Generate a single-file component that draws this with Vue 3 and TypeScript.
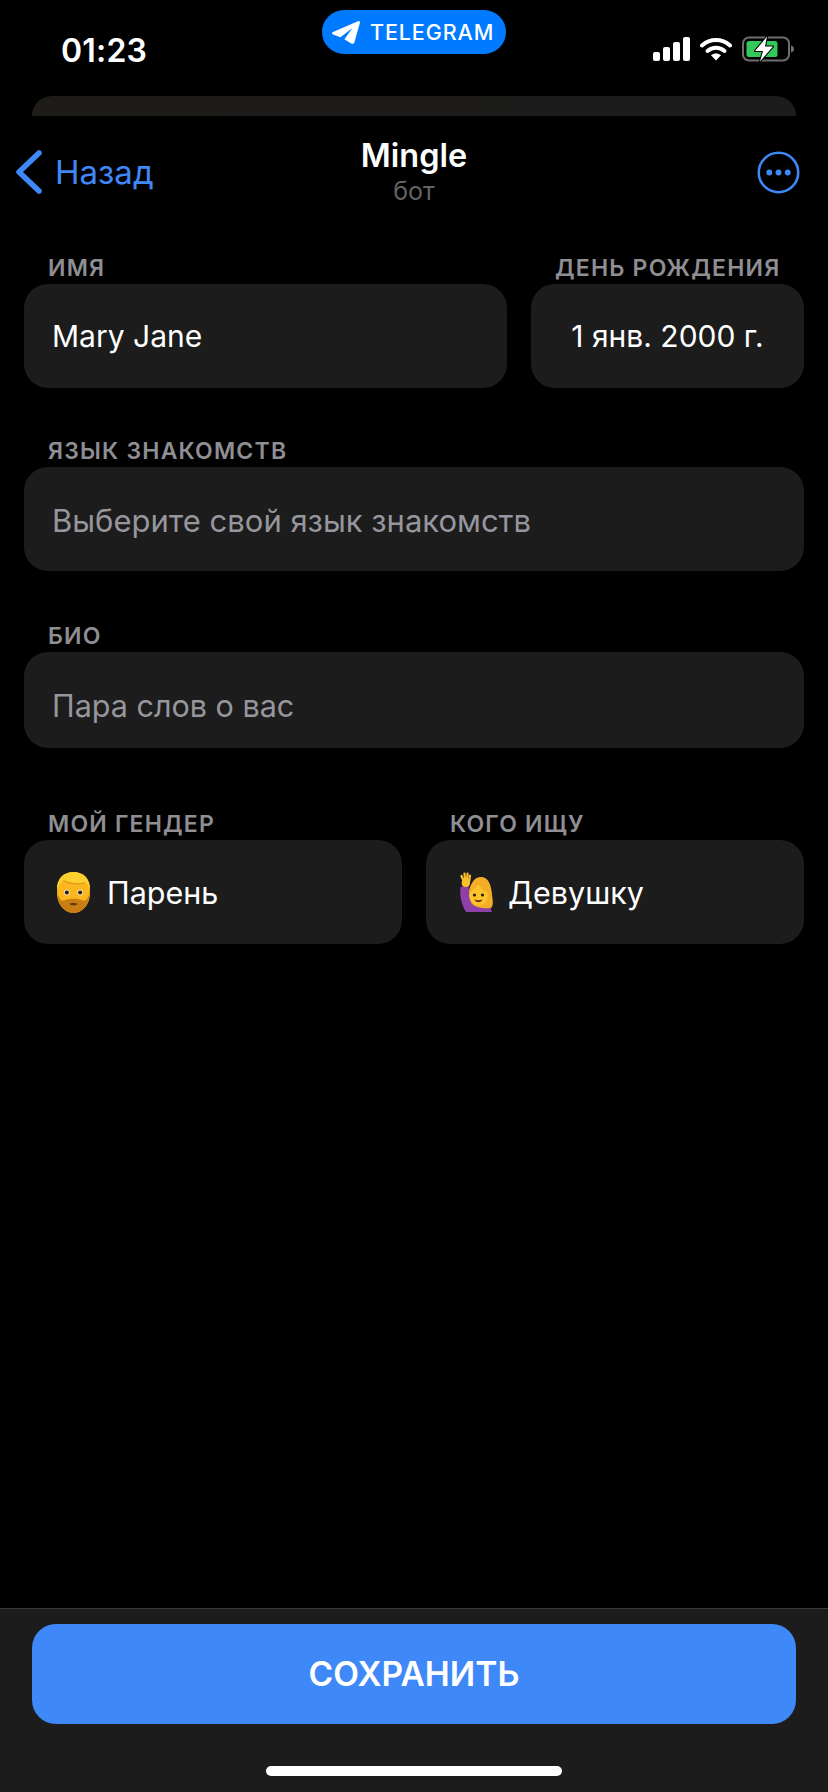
<script setup lang="ts">
interface Option {
	label: string;
	value: string;
	icon: "man" | "woman";
}

const options: Option[] = [
	{ label: "Мой гендер", value: "Парень", icon: "man" },
	{ label: "Кого ищу", value: "Девушку", icon: "woman" },
];
</script>

<template>
	<div class="screen">
		<header class="status">
			<span class="time">01:23</span>
			<div class="pill">
				<svg class="plane" viewBox="0 0 28 23" width="28" height="23">
					<path
						d="M28 1.6C28 .4 27 -.3 25.9 .2L1 11C-.3 11.6 -.3 13.1 1 13.6L8.4 16.3L20.5 7L12.4 18.2L19.2 22.4C20.6 23.2 22.2 22.5 22.5 20.9Z"
						fill="#fff"
					/>
				</svg>
				<span>TELEGRAM</span>
			</div>
			<div class="indicators">
				<svg width="37" height="24" viewBox="0 0 37 24">
					<rect x="0" y="15" width="7" height="9" rx="2" fill="#fff" />
					<rect x="10" y="10" width="7" height="14" rx="2" fill="#fff" />
					<rect x="20" y="5" width="7" height="19" rx="2" fill="#fff" />
					<rect x="30" y="0" width="7" height="24" rx="2" fill="#fff" />
				</svg>
				<svg width="32" height="24" viewBox="0 0 32 24">
					<path d="M2 8.5C10 1.3 22 1.3 30 8.5" fill="none" stroke="#fff" stroke-width="4" stroke-linecap="round" />
					<path d="M7.5 14C12.5 9.8 19.5 9.8 24.5 14" fill="none" stroke="#fff" stroke-width="4" stroke-linecap="round" />
					<path d="M11 18.2C14 15.8 18 15.8 21 18.2L16 23.6Z" fill="#fff" />
				</svg>
				<svg class="battery" width="52" height="26" viewBox="0 0 52 26">
					<rect x="1" y="1.5" width="46" height="23" rx="6" fill="none" stroke="#6e6e70" stroke-width="2" />
					<rect x="4.5" y="5" width="31" height="16" rx="2.5" fill="#34c759" />
					<path d="M49 9.5C51 10 52 11.4 52 13C52 14.6 51 16 49 16.5Z" fill="#6e6e70" />
					<path d="M25 .5L13 15H21L18 25.5L31 10.5H23Z" fill="#fff" stroke="#000" stroke-width="2" stroke-linejoin="round" paint-order="stroke" />
				</svg>
			</div>
		</header>

		<div class="peek"></div>

		<nav class="nav">
			<div class="back">
				<svg width="26" height="44" viewBox="0 0 26 44">
					<path d="M23 3L3 22L23 41" fill="none" stroke="#3f88f7" stroke-width="5.5" stroke-linecap="round" stroke-linejoin="round" />
				</svg>
				<span>Назад</span>
			</div>
			<div class="title">
				<strong>Mingle</strong>
				<small>бот</small>
			</div>
			<svg class="more" width="43" height="43" viewBox="0 0 44 44">
				<circle cx="22" cy="22" r="20.2" fill="none" stroke="#3f88f7" stroke-width="2.6" />
				<circle cx="12.6" cy="22" r="3" fill="#3f88f7" />
				<circle cx="22" cy="22" r="3" fill="#3f88f7" />
				<circle cx="31.4" cy="22" r="3" fill="#3f88f7" />
			</svg>
		</nav>

		<main class="form">
			<div class="row row--name">
				<label class="field">
					<span class="label">Имя</span>
					<div class="box box--value">Mary Jane</div>
				</label>
				<label class="field">
					<span class="label">День рождения</span>
					<div class="box box--value box--center">1 янв. 2000 г.</div>
				</label>
			</div>

			<label class="field field--lang">
				<span class="label">Язык знакомств</span>
				<div class="box box--hint">Выберите свой язык знакомств</div>
			</label>

			<label class="field field--bio">
				<span class="label">Био</span>
				<div class="box box--hint box--short">Пара слов о вас</div>
			</label>

			<div class="row row--gender">
				<label v-for="option in options" :key="option.label" class="field">
					<span class="label">{{ option.label }}</span>
					<div class="box box--option" :class="`box--${option.icon}`">
						<svg v-if="option.icon === 'man'" class="emoji" width="35" height="41" viewBox="0 0 34 40">
							<path d="M1 17C1 6 8 0 17 0C26 0 33 6 33 17V23C32 33 25 40 17 40C9 40 2 33 1 23Z" fill="#fab81e" />
							<path d="M1 18C0 6 8 0 17 0C26 0 34 6 33 18C32 14 31 12 28.5 10.5C22 12.5 13 11.5 7 8.500C4 10.5 2.5 13.5 1 18Z" fill="#fdd02f" />
							<path d="M7 8.5C13 11.5 22 12.5 28.5 10.5" fill="none" stroke="#dc9614" stroke-width="1.2" />
							<path d="M1 21C2 33 9 40 17 40C25 40 32 33 33 21C31 25 30 28 27 28C24 26.5 20 26 17 26C14 26 10 26.5 7 28C4 28 3 25 1 21Z" fill="#c97e14" />
							<path d="M13 31C15 30 19 30 21 31C20 33 14 33 13 31Z" fill="#5e380a" />
							<circle cx="10.5" cy="20" r="2.900" fill="#f4e2b8" />
							<circle cx="23.500" cy="20" r="2.900" fill="#f4e2b8" />
							<circle cx="10.5" cy="20" r="2" fill="#2c1c0c" />
							<circle cx="23.5" cy="20" r="2" fill="#2c1c0c" />
						</svg>
						<svg v-else class="emoji" width="35" height="40" viewBox="0 0 35 40">
							<path d="M1.5 15C.5 22 2 32 7 40H33C32 36 30 33 26 33L16 34C12 30 10 22 9.5 13Z" fill="#8e3fa8" />
							<path d="M5 10L2.5 4M6.2 9L5.5 1.5M8 9L8.5 1.5M10 10L11 3.5" stroke="#f9c12e" stroke-width="2.2" stroke-linecap="round" />
							<ellipse cx="6.8" cy="11" rx="4.2" ry="4" fill="#f9c12e" />
							<path d="M11 22C11 10 16 5 22 5C29 5 32 12 33 22C33.5 28 35 33 32 36C27 37 17 36 13 32C11 29 11 26 11 22Z" fill="#f4ad26" />
							<ellipse cx="19.5" cy="23" rx="9.5" ry="10.5" fill="#fcc42a" />
							<path d="M10 21C13 19 17 16 19.5 12C21 16 25 19 29 21C29 14 25 9 19.5 9C13 9 10 14 10 21Z" fill="#f4ad26" />
							<circle cx="15.5" cy="23" r="1.6" fill="#2c1c0c" />
							<circle cx="23.5" cy="23" r="1.6" fill="#2c1c0c" />
							<path d="M15.5 27.5C18 28.5 21 28.5 23.5 27.5C22.5 31 16.5 31 15.5 27.5Z" fill="#6b2d18" />
						</svg>
						<span>{{ option.value }}</span>
					</div>
				</label>
			</div>
		</main>

		<footer class="footer">
			<button class="save" type="button">СОХРАНИТЬ</button>
			<div class="home"></div>
		</footer>
	</div>
</template>

<style>
html,
body {
	background: #000;
}
</style>

<style scoped>
.screen {
	display: flex;
	flex-direction: column;
	width: 828px;
	height: 1792px;
	overflow: hidden;
	background: #000;
	color: #fff;
	font-family: Inter, "Noto Sans", sans-serif;
}

.status {
	position: relative;
	display: flex;
	justify-content: space-between;
	align-items: center;
	height: 96px;
	padding: 2px 34px 0 61px;
	box-sizing: border-box;
}

.time {
	margin-top: 2px;
	font-size: 32px;
	font-weight: 600;
	letter-spacing: 0.2px;
}

.pill {
	position: absolute;
	top: 10px;
	left: 322px;
	display: flex;
	align-items: center;
	gap: 10px;
	width: 184px;
	height: 44px;
	padding-left: 10px;
	box-sizing: border-box;
	border-radius: 22px;
	background: #007aff;
	font-size: 21.5px;
	font-weight: 500;
	letter-spacing: 0.9px;
}

.indicators {
	display: flex;
	align-items: center;
	gap: 10px;
}

.peek {
	flex: none;
	height: 20px;
	margin: 0 32px;
	border-radius: 20px 20px 0 0;
	background: linear-gradient(90deg, #1e1c18, #1c1c1d);
}

.nav {
	display: grid;
	grid-template-columns: 1fr auto 1fr;
	align-items: center;
	height: 112px;
	padding: 0 28px 0 16px;
}

.back {
	display: flex;
	align-items: center;
	gap: 13px;
	color: #3f88f7;
	font-size: 33px;
}

.title {
	display: flex;
	flex-direction: column;
	align-items: center;
	margin-left: 12px;
}

.title strong {
	font-size: 32.5px;
	font-weight: 600;
	line-height: 38px;
}

.title small {
	font-size: 25px;
	line-height: 32px;
	color: #636366;
}

.more {
	justify-self: end;
}

.form {
	display: flex;
	flex-direction: column;
	padding: 0 24px;
}

.row {
	display: flex;
	gap: 24px;
}

.row--name {
	margin-top: 24px;
}

.row--name .field:first-child {
	flex: 1;
}

.row--name .field:last-child {
	width: 273px;
}

.row--gender {
	margin-top: 60px;
}

.row--gender .field {
	flex: 1;
}

.field {
	display: flex;
	flex-direction: column;
}

.field--lang {
	margin-top: 47px;
}

.field--bio {
	margin-top: 49px;
}

.label {
	height: 32px;
	padding-left: 24px;
	font-size: 23px;
	font-weight: 600;
	line-height: 32px;
	letter-spacing: 1.2px;
	text-transform: uppercase;
	white-space: nowrap;
	color: #8e8e93;
}

.box {
	display: flex;
	align-items: center;
	height: 104px;
	padding: 0 28px;
	box-sizing: border-box;
	border-radius: 24px;
	background: #1c1c1c;
	font-size: 31px;
}

.box--value {
	font-size: 30px;
}

.box--center {
	justify-content: center;
	padding: 0;
}

.box--hint {
	padding-top: 2px;
	color: #96969c;
}

.box--short {
	height: 96px;
	padding-top: 10px;
	font-size: 30.5px;
}

.box--option {
	font-size: 30.5px;
}

.box--man {
	gap: 16px;
	padding-left: 32px;
}

.box--woman {
	gap: 14px;
	padding-left: 33px;
}

.emoji {
	flex: none;
}

.footer {
	display: flex;
	flex-direction: column;
	align-items: center;
	margin-top: auto;
	height: 184px;
	padding-top: 15px;
	box-sizing: border-box;
	border-top: 1px solid #38383a;
	background: #1c1c1c;
}

.save {
	width: 764px;
	height: 100px;
	border: 0;
	border-radius: 24px;
	background: #3f88f7;
	color: #fff;
	font-family: inherit;
	font-size: 33.5px;
	font-weight: 600;
}

.home {
	width: 296px;
	height: 10px;
	margin-top: 42px;
	border-radius: 5px;
	background: #fff;
}
</style>
